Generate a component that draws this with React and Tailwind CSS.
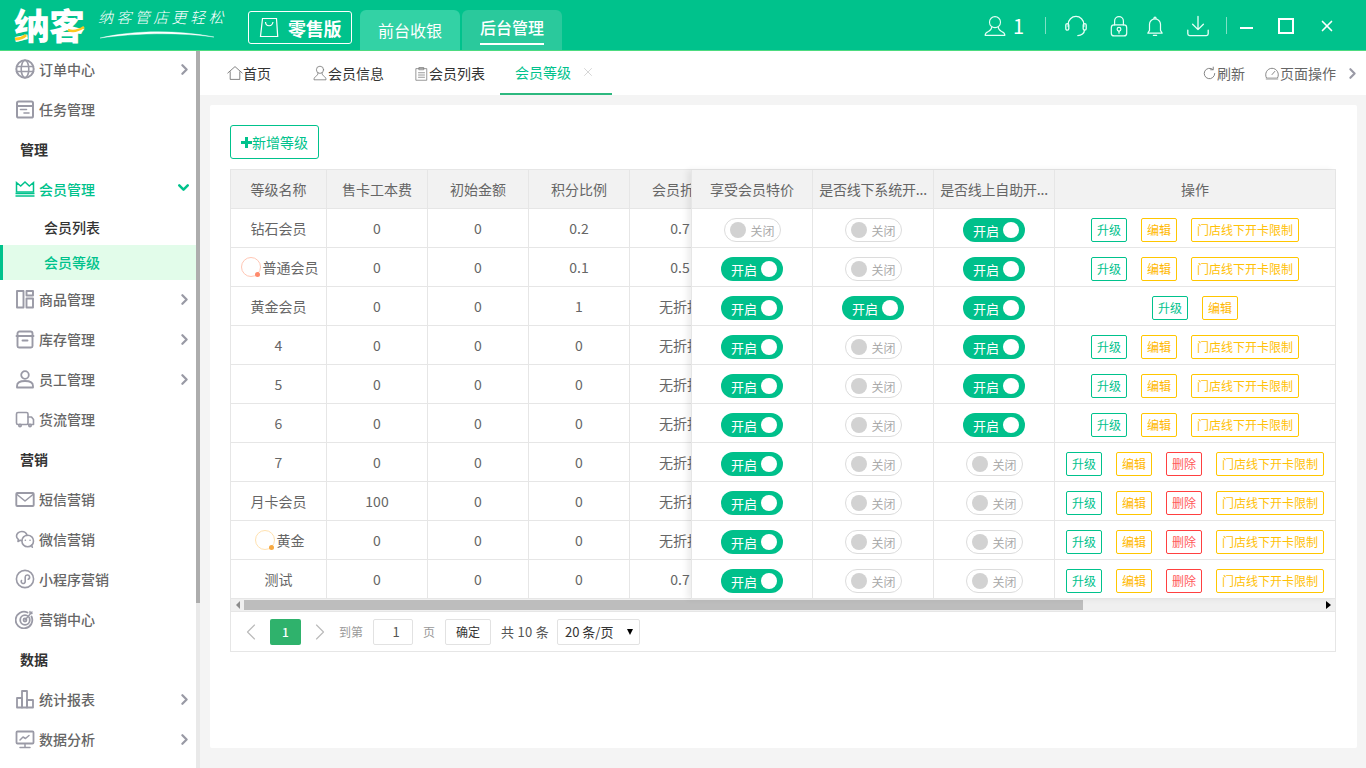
import React from "react";
import { ChevronRight, ChevronLeft, ChevronDown, X } from "lucide-react";

const S = ({ size = 20, color = "#9a9aa6", sw = 1.6, className = "", children }) => (
  <svg width={size} height={size} viewBox="0 0 20 20" fill="none" stroke={color} strokeWidth={sw} strokeLinecap="round" strokeLinejoin="round" className={className}>
    {children}
  </svg>
);

const icons = {
  globe: <><circle cx="10" cy="10" r="8.7" strokeWidth="2" /><ellipse cx="10" cy="10" rx="3.8" ry="8.7" /><path d="M1.5 7.5h17M1.5 12.5h17" /></>,
  task: <><rect x="2" y="2.500" width="16" height="16" rx="1.6" strokeWidth="2" /><path d="M2 7h16" strokeWidth="2" /><path d="M5.500 10.500h6M9 14h5" /></>,
  crown: <><path d="M1.500 13V3.500l4.200 3.500 4.300-4 4.300 4 4.200-3.500V13z" strokeWidth="1.5" strokeLinejoin="miter" /><path d="M.5 14.500h19M.5 17h19" strokeWidth="1.6" strokeLinecap="butt" /></>,
  goods: <><rect x="2" y="2" width="6.500" height="16.500" strokeWidth="1.9" /><rect x="11.500" y="2" width="6.500" height="4.500" strokeWidth="1.9" /><rect x="11.500" y="9.500" width="6.500" height="9" strokeWidth="1.9" /></>,
  stock: <><path d="M2.500 7V4.500a2 2 0 0 1 2-2h11a2 2 0 0 1 2 2V7" strokeWidth="1.9" /><path d="M1.500 7h17" strokeWidth="1.9" /><rect x="2.500" y="7" width="15" height="11.500" rx="1.500" strokeWidth="1.9" /><path d="M7.500 11.500h5" strokeWidth="1.9" /></>,
  staff: <><circle cx="10" cy="6" r="3.800" strokeWidth="1.8" /><path d="M2 18.500v-1.500c0-3 3-5 8-5s8 2 8 5v1.500z" strokeWidth="1.8" /></>,
  truck: <><rect x="1.500" y="3.500" width="11.500" height="12" rx="1.500" /><path d="M13 8h3.500l2 2.500V15.500H13" /><circle cx="5" cy="16.500" r="1.200" /><circle cx="15" cy="16.500" r="1.200" /></>,
  mail: <><rect x="1.300" y="4" width="17.400" height="13" rx="1" strokeWidth="1.9" /><path d="M2 5.500l8 6.500 8-6.500" strokeWidth="1.6" /></>,
  wechat: <><path d="M12 6.500C11.500 4 9.200 2.500 6.800 2.500 3.900 2.500 1.500 4.500 1.500 7c0 1.400.7 2.600 1.800 3.400L3 12.500l2.200-1.200c.6.2 1 .2 1.600.2" /><circle cx="12.700" cy="12" r="5.800" /><path d="M10.300 11.200h.1M15 11.200h.1M16.500 16.200l.8 2" /></>,
  mini: <><circle cx="10" cy="10" r="8.600" strokeWidth="1.6" /><path d="M6.500 11.500a2 2 0 1 0 3.700 1V8a2.200 2.200 0 1 1 3 2.200" strokeWidth="1.6" /></>,
  target: <><path d="M16.500 7.500a8.300 8.300 0 1 1-4-4" strokeWidth="1.8" /><circle cx="10" cy="11" r="4.800" strokeWidth="1.8" /><circle cx="10" cy="11" r="1.600" strokeWidth="1.6" /><path d="M10 11l7-8M15 2.500v2h2" strokeWidth="1.4" /></>,
  chart: <><rect x="2" y="9" width="5" height="9.500" strokeWidth="1.8" /><rect x="7" y="2" width="5" height="16.500" strokeWidth="1.8" /><rect x="12" y="11" width="6" height="7.500" strokeWidth="1.8" /></>,
  monitor: <><rect x="1.500" y="2.500" width="17" height="12" rx="1" strokeWidth="1.8" /><path d="M5 11l3-3 2.500 1.500L14 6.500M10 15v3M5 18.500h10" strokeWidth="1.500" /></>,
};

const Chevron = () => <ChevronRight size={17} strokeWidth={3.2} color="#999aa5" className="ml-auto mr-[3px]" />;

function Item({ icon, label, chevron }) {
  return (
    <div className="h-10 flex items-center pl-[15px] pb-[2px] text-[14px] font-medium text-[#666666]">
      <S>{icons[icon]}</S>
      <span className="ml-1">{label}</span>
      {chevron && <Chevron />}
    </div>
  );
}

const Section = ({ label }) => <div className="h-10 flex items-center pl-5 pb-[2px] text-[14px] font-bold text-[#333333]">{label}</div>;

function Sidebar() {
  return (
    <aside className="w-[200px] shrink-0 flex bg-white overflow-hidden">
      <nav className="w-[196px] -mt-px">
        <Item icon="globe" label="订单中心" chevron />
        <Item icon="task" label="任务管理" />
        <Section label="管理" />
        <div className="h-10 flex items-center pl-[15px] pb-[2px] text-[14px] font-medium text-[#00c28c]">
          <S color="#00c28c">{icons.crown}</S>
          <span className="ml-1">会员管理</span>
          <ChevronDown size={17} strokeWidth={3.6} color="#00c28c" className="ml-auto mr-1 -mt-[3px]" />
        </div>
        <div className="h-[35px] flex items-center pl-11 text-[14px] font-medium text-[#333333]">会员列表</div>
        <div className="h-[35px] flex items-center pl-[41px] text-[14px] font-medium text-[#00c28c] bg-[#e2fcea] border-l-[3px] border-[#00c28c]">会员等级</div>
        <Item icon="goods" label="商品管理" chevron />
        <Item icon="stock" label="库存管理" chevron />
        <Item icon="staff" label="员工管理" chevron />
        <Item icon="truck" label="货流管理" />
        <Section label="营销" />
        <Item icon="mail" label="短信营销" />
        <Item icon="wechat" label="微信营销" />
        <Item icon="mini" label="小程序营销" />
        <Item icon="target" label="营销中心" />
        <Section label="数据" />
        <Item icon="chart" label="统计报表" chevron />
        <Item icon="monitor" label="数据分析" chevron />
      </nav>
      <div className="w-1 h-full bg-[#e9e9e9]">
        <div className="h-[552px] bg-[#adadad]" />
      </div>
    </aside>
  );
}

function Header() {
  const w = "#e6fff6";
  return (
    <header className="h-[51px] shrink-0 bg-[#00c28c] border-b border-[#4ddb80] flex items-stretch text-white">
      <div className="w-[248px] pl-[14px] flex items-center">
        <span className="relative text-[36px] leading-none font-black tracking-[-1px] -mt-[2px]">
          纳客
          <svg width="72" height="32" viewBox="0 0 72 32" fill="none" className="absolute left-0 top-[4px]">
            <path d="M1 29c4 0 8-1 11-4" stroke="#ffc81e" strokeWidth="3" />
            <path d="M54 20c5 2 10 1 16-3" stroke="#ffc81e" strokeWidth="2.500" />
          </svg>
        </span>
        <div className="ml-[14px] flex flex-col -mt-[4px]">
          <span className="text-[15px] leading-[20px] tracking-[3.4px] font-light italic whitespace-nowrap">纳客管店更轻松</span>
          <svg width="118" height="10" viewBox="0 0 118 10" fill="none" className="mt-[2px]">
            <path d="M2 9C32 2 74 0 116 8C80 3 37 4 2 9Z" fill="#fff" stroke="#fff" strokeWidth=".4" />
          </svg>
        </div>
      </div>
      <div className="mt-[11px] h-[33px] w-[104px] border border-white rounded-[3px] flex items-center pl-[10px]">
        <svg width="20" height="23" viewBox="0 0 20 22" fill="none" stroke="#fff" strokeWidth="1.2">
          <path d="M3.500 2h14l1.200 18H1.500z" />
          <path d="M6.500 5.500c.5 5 6.500 5 7.500 0" />
        </svg>
        <span className="ml-[9px] text-[18px] leading-none font-bold tracking-[-0.3px] whitespace-nowrap">零售版</span>
      </div>
      <div className="ml-2 mt-[10px] w-[100px] h-10 rounded-t-[6px] bg-[#33d2a5] flex items-center justify-center text-[16px]">前台收银</div>
      <div className="ml-[2px] mt-[10px] w-[100px] h-10 rounded-t-[6px] bg-[#2ac99c] flex justify-center">
        <span className="h-[35px] flex items-center border-b-2 border-white text-[16px] font-medium">后台管理</span>
      </div>
      <div className="ml-auto flex items-center pt-[1px]">
        <S size={22} color={w} sw={1}><circle cx="10" cy="6.500" r="5" /><path d="M7 11c0 2-1 3-3 4-2 .8-3 1.500-3 3.500h18c0-2-1-2.700-3-3.500-2-1-3-2-3-4" /></S>
        <span className="ml-[7px] w-[10px] text-[20px] text-center">1</span>
        <div className="ml-[22px] w-px h-[17px] bg-[#7fe0c5]" />
        <S size={24} color={w} sw={1.1} className="ml-[18px]"><path d="M3.500 10.500V8.500a6.500 6.500 0 0 1 13 0v2" /><rect x="1.500" y="8" width="2.500" height="5.500" rx="1.200" /><rect x="16" y="8" width="2.500" height="5.500" rx="1.200" /><path d="M17 13.500c0 2.500-2.500 4.500-5.500 4.500" /></S>
        <S size={22} color={w} sw={1.1} className="ml-5"><path d="M6 9V5.500a4 4 0 0 1 8 0V9" /><rect x="3" y="9" width="14" height="10" rx="2.500" /><circle cx="10" cy="13" r="1.700" /><path d="M10 14.700V16.500" /></S>
        <S size={22} color={w} sw={1.1} className="ml-[14px]"><path d="M5 14V8.500a5 5 0 0 1 10 0V14l1.500 2.500h-13z" /><path d="M9 3.500c0-2 2-2 2 0M8.500 18.500h3" /></S>
        <S size={24} color={w} sw={1.1} className="ml-5"><path d="M10 2v11M5.500 8.500L10 13l4.500-4.500" /><path d="M1.500 13.500v3c0 .8.500 1.500 1.500 1.500h14c1 0 1.500-.7 1.500-1.500v-3" /></S>
        <div className="ml-4 w-px h-[17px] bg-[#7fe0c5]" />
        <div className="ml-[13px] w-[13px] h-[2px] bg-white mt-[4px]" />
        <div className="ml-[25px] w-[16px] h-[16px] border-2 border-white" />
        <X size={18} strokeWidth={2.2} color="#fff" className="ml-6 mr-[30px]" />
      </div>
    </header>
  );
}

function Tabs() {
  const t = "flex items-center h-full text-[14px] text-[#333333] px-[15px]";
  return (
    <div className="h-[44px] shrink-0 bg-white flex items-stretch pl-[12px] pr-[5px]">
      <div className={t + " mr-[11px]"}>
        <S size={16} color="#666" sw={1}><path d="M1 10L10 2l9 8M4 8.500V18h12V8.500" /></S>
        <span>首页</span>
      </div>
      <div className={t}>
        <S size={16} color="#777" sw={1}><circle cx="10" cy="6" r="4.500" /><path d="M7.500 10c0 2-1 3-3 4.500-1.500 1-2 2-2 4h15c0-2-.5-3-2-4-2-1.500-3-2.500-3-4.500" /></S>
        <span>会员信息</span>
      </div>
      <div className={t}>
        <S size={15} color="#777" sw={1}><path d="M3 3.500h14V19H3zM7 2h6v3H7zM6 9h8M6 12h8M6 15h8" /></S>
        <span>会员列表</span>
      </div>
      <div className="flex items-center h-full w-[112px] pl-[15px] text-[14px] text-[#00c28c] border-b-2 border-[#2db87f]">
        <span>会员等级</span>
        <X size={14} strokeWidth={1.2} color="#c4c4c4" className="ml-[10px]" />
      </div>
      <div className="ml-auto flex items-center text-[14px] text-[#666666]">
        <S size={15} color="#777" sw={1.2}><path d="M17 10a7 7 0 1 1-2.500-5.400M15 1.500v3.500h-3.500" /></S>
        <span>刷新</span>
        <S size={16} color="#777" sw={1.1} className="ml-[19px]"><path d="M3 16a8 8 0 1 1 14 0z" /><path d="M10 12l3.500-4" /><path d="M3 17.500h14" strokeWidth="2" stroke="#bbb" /></S>
        <span>页面操作</span>
        <ChevronRight size={17} strokeWidth={3} color="#9a9aa6" className="ml-2" />
      </div>
    </div>
  );
}

const rows = [
  { n: "钻石会员", a: "0", b: "0", c: "0.2", d: "0.7", s: [0, 0, 1], ops: "ubl" },
  { n: "普通会员", av: "#ffc7b5", dot: "#ff8a6c", a: "0", b: "0", c: "0.1", d: "0.5", s: [1, 0, 1], ops: "ubl" },
  { n: "黄金会员", a: "0", b: "0", c: "1", d: "无折扣", s: [1, 1, 1], ops: "ub" },
  { n: "4", a: "0", b: "0", c: "0", d: "无折扣", s: [1, 0, 1], ops: "ubl" },
  { n: "5", a: "0", b: "0", c: "0", d: "无折扣", s: [1, 0, 1], ops: "ubl" },
  { n: "6", a: "0", b: "0", c: "0", d: "无折扣", s: [1, 0, 1], ops: "ubl" },
  { n: "7", a: "0", b: "0", c: "0", d: "无折扣", s: [1, 0, 0], ops: "ubdl" },
  { n: "月卡会员", a: "100", b: "0", c: "0", d: "无折扣", s: [1, 0, 0], ops: "ubdl" },
  { n: "黄金", av: "#ffe2b0", dot: "#f7a941", a: "0", b: "0", c: "0", d: "无折扣", s: [1, 0, 0], ops: "ubdl" },
  { n: "测试", a: "0", b: "0", c: "0", d: "0.7", s: [1, 0, 0], ops: "ubdl" },
];

function Switch({ on }) {
  return on ? (
    <div className="w-[62px] h-6 rounded-full bg-[#00c08b] flex items-center pl-[10px] text-[13px] text-white">
      <span className="mt-[2px]">开启</span>
      <div className="ml-[4px] w-4 h-4 rounded-full bg-white" />
    </div>
  ) : (
    <div className="w-[57px] h-6 rounded-full border border-[#dcdcdc] bg-white flex items-center pl-[5px] text-[12px] text-[#aaaaaa]">
      <div className="w-4 h-4 rounded-full bg-[#d2d2d2]" />
      <span className="ml-[5px] mt-[2px]">关闭</span>
    </div>
  );
}

const opStyles = {
  u: ["升级", "w-9 border-[#00c28c] text-[#00c28c]"],
  b: ["编辑", "w-9 border-[#ffc600] text-[#ffb800]"],
  d: ["删除", "w-9 border-[#ff4040] text-[#ff5a5a]"],
  l: ["门店线下开卡限制", "w-[108px] border-[#ffc600] text-[#ffc107]"],
};

function Cell({ w, children, className = "" }) {
  return <div className={`${w} h-[39px] shrink-0 border-r border-b border-[#e6e6e6] flex items-center justify-center ${className}`}>{children}</div>;
}

const CL = ["w-[96px]", "w-[101px]", "w-[101px]", "w-[101px]", "w-[101px]"];

function Name({ r }) {
  if (!r.av) return <span>{r.n}</span>;
  return (
    <span className="flex items-center gap-[2px] pl-[2px]">
      <span className="relative w-5 h-5 rounded-full border" style={{ borderColor: r.av }}>
        <span className="absolute right-0 bottom-[-1px] w-[5px] h-[5px] rounded-full" style={{ background: r.dot }} />
      </span>
      {r.n}
    </span>
  );
}

function Table() {
  return (
    <div className="mt-[10px] border border-[#e6e6e6] text-[14px] text-[#666666]">
      <div className="flex">
        <div className="w-[460px] overflow-hidden shrink-0">
          <div className="flex w-[600px] bg-[#f2f2f2]">
            {["等级名称", "售卡工本费", "初始金额", "积分比例", "会员折扣"].map((h, i) => (
              <Cell key={h} w={CL[i]}>{h}</Cell>
            ))}
          </div>
          {rows.map((r, i) => (
            <div key={i} className="flex w-[600px]">
              <Cell w={CL[0]}><Name r={r} /></Cell>
              <Cell w={CL[1]}>{r.a}</Cell>
              <Cell w={CL[2]}>{r.b}</Cell>
              <Cell w={CL[3]}>{r.c}</Cell>
              <Cell w={CL[4]}>{r.d}</Cell>
            </div>
          ))}
        </div>
        <div className="w-[644px] shrink-0 border-l border-[#e6e6e6] bg-white relative shadow-[-4px_0_6px_rgba(0,0,0,0.07)]">
          <div className="flex bg-[#f2f2f2]">
            <Cell w="w-[121px]">享受会员特价</Cell>
            <Cell w="w-[121px]" className="tracking-[-0.2px] whitespace-nowrap">是否线下系统开...</Cell>
            <Cell w="w-[121px]" className="tracking-[-0.2px] whitespace-nowrap">是否线上自助开...</Cell>
            <Cell w="flex-1" className="border-r-0">操作</Cell>
          </div>
          {rows.map((r, i) => (
            <div key={i} className="flex">
              {r.s.map((v, j) => (
                <Cell key={j} w="w-[121px]" className="pt-[3px]"><Switch on={v} /></Cell>
              ))}
              <Cell w="flex-1" className="border-r-0 pt-[3px] gap-[14px]">
                {r.ops.split("").map((o) => (
                  <div key={o} className={`h-6 border rounded-[2px] flex items-center justify-center text-[12px] ${opStyles[o][1]}`}>
                    {opStyles[o][0]}
                  </div>
                ))}
              </Cell>
            </div>
          ))}
        </div>
      </div>
      <div className="h-[13px] bg-[#f0f0f0] border-b border-[#e6e6e6] flex items-center">
        <div className="w-[13px] flex justify-center">
          <div className="w-0 h-0 border-y-[4px] border-y-transparent border-r-[4px] border-r-[#8c8c8c]" />
        </div>
        <div className="w-[839px] h-[10px] bg-[#bdbdbd]" />
        <div className="ml-auto w-[13px] flex justify-center">
          <div className="w-0 h-0 border-y-[4px] border-y-transparent border-l-[5px] border-l-black" />
        </div>
      </div>
      <div className="h-[39px] flex items-center pl-[6px] text-[12px] text-[#999999]">
        <ChevronLeft size={28} strokeWidth={1} color="#bbbbbb" />
        <div className="ml-[5px] w-[31px] h-[26px] bg-[#2fb26c] rounded-[2px] text-white flex items-center justify-center font-medium">1</div>
        <ChevronRight size={28} strokeWidth={1} color="#bbbbbb" className="ml-[5px]" />
        <span className="ml-[5px]">到第</span>
        <div className="ml-[10px] w-10 h-[26px] border border-[#e2e2e2] rounded-[2px] flex items-center justify-center pl-[6px] text-[#555555] text-[13px]">1</div>
        <span className="ml-[10px]">页</span>
        <div className="ml-[10px] w-[46px] h-[26px] border border-[#e2e2e2] rounded-[2px] flex items-center justify-center text-[#333333]">确定</div>
        <span className="ml-[10px] w-[47px] text-[13px] text-[#555555] whitespace-nowrap tracking-[0.3px]">共 10 条</span>
        <div className="ml-[9px] w-[83px] h-[26px] border border-[#e2e2e2] rounded-[2px] flex items-center pl-[7px] text-[13px] text-[#333333] whitespace-nowrap">
          20 条/页
          <span className="ml-auto mr-[6px] w-0 h-0 border-x-[3.5px] border-x-transparent border-t-[6px] border-t-black" />
        </div>
      </div>
    </div>
  );
}

export default function App() {
  return (
    <div className="w-[1366px] h-screen overflow-hidden flex flex-col font-['Noto_Sans_CJK_SC','Noto_Sans',sans-serif]">
      <Header />
      <div className="flex-1 flex min-h-0">
        <Sidebar />
        <main className="flex-1 flex flex-col bg-[#f4f4f4] min-w-0">
          <Tabs />
          <section className="mt-[10px] ml-[10px] mr-[9px] mb-5 flex-1 bg-white rounded-[2px] pl-5 pr-[21px] pt-5">
            <button className="w-[89px] h-[34px] border border-[#00c28c] rounded-[3px] text-[#00c28c] text-[14px] flex items-center justify-center pt-[1px]">
              <svg width="11" height="11" viewBox="0 0 11 11" fill="#00c28c"><path d="M4 0h3v4h4v3H7v4H4V7H0V4h4z" /></svg>
              <span>新增等级</span>
            </button>
            <Table />
          </section>
        </main>
      </div>
    </div>
  );
}
